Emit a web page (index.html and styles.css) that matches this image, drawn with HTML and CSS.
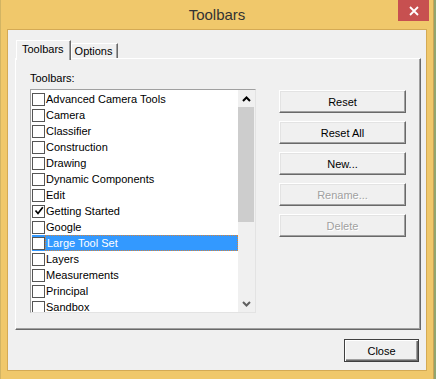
FILE: index.html
```html
<!DOCTYPE html>
<html lang="en">
<head>
  <meta charset="UTF-8">
  <title>Toolbars</title>
  <link rel="stylesheet" href="styles.css">
</head>
<body>
  <div class="window">
    <div class="titlebar">
      <span></span>
      <span class="title">Toolbars</span>
      <button class="close-x" title="Close">
        <svg width="10" height="10" viewBox="0 0 10 10"><path d="M1 1 L9 9 M9 1 L1 9" stroke="#fff" stroke-width="1.8"/></svg>
      </button>
    </div>

    <div class="client">
      <div class="tabs">
        <div class="tab active">Toolbars</div>
        <div class="tab">Options</div>
      </div>

      <div class="panel">
        <div class="list-col">
          <div class="caption">Toolbars:</div>
          <div class="listbox">
            <ul class="items">
              <li><span class="box"></span>Advanced Camera Tools</li>
              <li><span class="box"></span>Camera</li>
              <li><span class="box"></span>Classifier</li>
              <li><span class="box"></span>Construction</li>
              <li><span class="box"></span>Drawing</li>
              <li><span class="box"></span>Dynamic Components</li>
              <li><span class="box"></span>Edit</li>
              <li><span class="box checked"><svg width="10" height="10" viewBox="0 0 10 10"><path d="M1.5 4.5 L4 7.5 L8.8 1.2" fill="none" stroke="#000" stroke-width="1.7"/></svg></span>Getting Started</li>
              <li><span class="box"></span>Google</li>
              <li class="selected"><span class="box"></span><span class="focus">Large Tool Set</span></li>
              <li><span class="box"></span>Layers</li>
              <li><span class="box"></span>Measurements</li>
              <li><span class="box"></span>Principal</li>
              <li><span class="box"></span>Sandbox</li>
            </ul>
            <div class="scrollbar">
              <div class="arrow">
                <svg width="9" height="6" viewBox="0 0 9 6"><path d="M1 5 L4.5 1.5 L8 5" fill="none" stroke="#000" stroke-width="2"/></svg>
              </div>
              <div class="thumb"></div>
              <div class="track"></div>
              <div class="arrow">
                <svg width="9" height="6" viewBox="0 0 9 6"><path d="M1 1 L4.5 4.5 L8 1" fill="none" stroke="#606060" stroke-width="2"/></svg>
              </div>
            </div>
          </div>
        </div>

        <div class="btn-col">
          <button class="btn">Reset</button>
          <button class="btn">Reset All</button>
          <button class="btn">New...</button>
          <button class="btn" disabled>Rename...</button>
          <button class="btn" disabled>Delete</button>
        </div>
      </div>

      <div class="footer">
        <button class="btn default">Close</button>
      </div>
    </div>
  </div>
</body>
</html>
```

FILE: styles.css
```css
body { margin: 0; background: #93a66e; font-family: "Liberation Sans", Arial, sans-serif; font-size: 11px; color: #000; }
.window { width: 434px; height: 379px; box-sizing: border-box; background: #f0c86b; border-left: 1px solid #d2b463; border-right: 1px solid #c9a458; display: flex; flex-direction: column; }

.titlebar { height: 29px; display: grid; grid-template-columns: 1fr auto 1fr; align-items: start; }
.title { font-size: 15px; color: #333; line-height: 29px; }
.close-x { justify-self: end; margin-right: 4px; width: 31px; height: 21px; border: none; padding: 0; background: #c75050; display: flex; align-items: center; justify-content: center; }

.client { margin: 0 6px 8px 6px; flex: 1; background: #f0f0f0; border: 1px solid #d4aa55; display: flex; flex-direction: column; }

.tabs { display: flex; align-items: flex-end; height: 18px; margin: 10px 0 0 8px; position: relative; z-index: 1; }
.tab { height: 14px; line-height: 15px; padding: 0 4px 0 3px; background: #f0f0f0; border-top: 1px solid #fff; border-left: 1px solid #fff; border-right: 1px solid #696969; box-shadow: inset -1px 0 #a0a0a0; }
.tab.active { height: 19px; line-height: 17px; padding: 0 6px 0 5px; margin-bottom: -2px; }

.panel { margin: 0 5px 0 7px; height: 272px; box-sizing: border-box; display: flex; border: 1px solid; border-color: #fff #696969 #696969 #fff; box-shadow: inset -1px -1px #a0a0a0; padding: 13px 0 0 14px; }

.caption { line-height: 13px; margin-bottom: 4px; }
.listbox { width: 226px; height: 224px; box-sizing: border-box; display: flex; background: #fff; border: 1px solid; border-color: #a0a0a0 #e3e3e3 #e3e3e3 #a0a0a0; overflow: hidden; }
.items { list-style: none; margin: 0; padding: 1px 0 0 1px; flex: 1; overflow: hidden; }
.items li { height: 16px; display: flex; align-items: center; white-space: nowrap; }
.box { width: 11px; height: 11px; border: 1px solid #555; background: #fff; margin: 0 1px 0 0; display: flex; align-items: center; justify-content: center; flex: none; }
.items li.selected { background: #3399ff; color: #fff; }
.focus { flex: 1; height: 14px; line-height: 14px; border: 1px dotted #d5843b; margin-left: -1px; padding-left: 1px; }

.scrollbar { width: 17px; display: flex; flex-direction: column; background: #f0f0f0; }
.arrow { height: 17px; display: flex; align-items: center; justify-content: center; flex: none; }
.thumb { height: 115px; margin: 0 1px 0 0; background: #cdcdcd; }
.track { flex: 1; }

.btn-col { margin-left: 23px; padding-top: 18px; display: flex; flex-direction: column; gap: 8px; }
.btn { width: 127px; height: 23px; padding: 0; font: inherit; color: #000; background: #f0f0f0; border: 1px solid; border-color: #fff #696969 #696969 #fff; box-shadow: inset -1px -1px #a0a0a0, inset 1px 1px #e3e3e3; }
.btn:disabled { color: #a0a0a0; text-shadow: 1px 1px #fff; }

.footer { display: flex; justify-content: flex-end; padding: 9px 7px 0 0; }
.btn.default { width: 75px; border-color: #404040; box-shadow: inset 1px 1px #fff, inset -1px -1px #696969, inset -2px -2px #a0a0a0; }
```
